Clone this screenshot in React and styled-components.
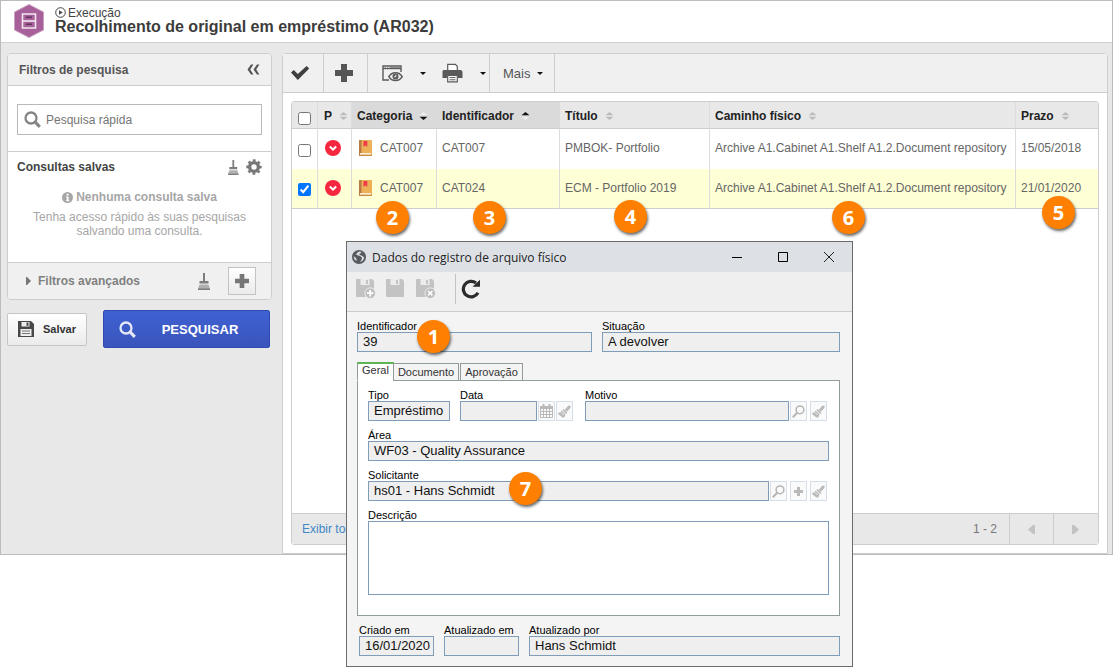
import { useState } from 'react';
import styled, { createGlobalStyle, css } from 'styled-components';

const GlobalStyle = createGlobalStyle`
	* {
		box-sizing: border-box;
	}
	body {
		margin: 0;
		background: #fff;
		font-family: "Liberation Sans", Arial, sans-serif;
		font-size: 12px;
		color: #555;
	}
	button, input, textarea {
		font-family: inherit;
		font-size: inherit;
		color: inherit;
	}
	button {
		padding: 0;
		cursor: pointer;
	}
	svg {
		display: block;
		flex: none;
	}
`;

/* ---------- icons ---------- */

const ArchiveLogo = () => (
	<svg width="32" height="34" viewBox="0 0 32 34">
		<path d="M16 .5 30.5 8v18L16 33.5 1.5 26V8z" fill="#a8609a" stroke="#c9a0c1" />
		<path d="M9.5 10h13v14h-13z" fill="#a8609a" stroke="#f3e8f1" strokeWidth="1.6" />
		<path d="M9.5 17h13" stroke="#f3e8f1" strokeWidth="1.6" />
		<path d="M13 13.2h6M13 20.2h6" stroke="#5f3558" strokeWidth="1.4" />
	</svg>
);

const PlayIcon = () => (
	<svg width="11" height="11" viewBox="0 0 11 11">
		<circle cx="5.5" cy="5.5" r="4.8" fill="none" stroke="#444" />
		<path d="M4 3.2 7.8 5.5 4 7.8z" fill="#444" />
	</svg>
);

const CollapseIcon = () => (
	<svg width="13" height="11" viewBox="0 0 13 11" fill="#555">
		<path d="M4 .5h2.4L3.2 5.5l3.2 5H4L.5 5.5z" />
		<path d="M10 .5h2.4L9.2 5.5l3.2 5H10L6.5 5.5z" />
	</svg>
);

const SearchIcon = ({ color = '#858585', width = 2.3 }) => (
	<svg width="17" height="17" viewBox="0 0 17 17" fill="none" stroke={color}>
		<circle cx="7" cy="7" r="5.5" strokeWidth={width} />
		<path d="m11.2 11.2 4.6 4.6" strokeWidth={width + 0.8} />
	</svg>
);

const BroomIcon = ({ size = 17 }) => (
	<svg width={(size * 12) / 17} height={size} viewBox="0 0 12 17" fill="#7d7d7d">
		<path d="M5 0h2v8H5z" />
		<path d="M1.5 8h9v2.5h-9z" />
		<path d="M1.5 11.5h9l1.5 4.5H0z" fill="#b0b0b0" />
		<path d="M0 15.5h12V17H0z" />
	</svg>
);

const GearIcon = () => (
	<svg width="16" height="16" viewBox="0 0 16 16">
		<circle cx="8" cy="8" r="4.4" fill="none" stroke="#777" strokeWidth="3.4" />
		<circle
			cx="8"
			cy="8"
			r="6.6"
			fill="none"
			stroke="#777"
			strokeWidth="2.2"
			strokeDasharray="2.8 2.384"
			strokeDashoffset="1.4"
		/>
	</svg>
);

const InfoIcon = () => (
	<svg width="11" height="11" viewBox="0 0 11 11">
		<circle cx="5.5" cy="5.5" r="5.5" fill="#a6a6a6" />
		<path d="M4.6 1.8h2v1.7h-2zM4 4.5h2.6v3.8h.8v1H4v-1h.7V5.5H4z" fill="#fff" />
	</svg>
);

const PlusIcon = ({ size = 14, color = '#777' }) => (
	<svg width={size} height={size} viewBox="0 0 18 18" fill={color}>
		<path d="M6 0h6v6h6v6h-6v6H6v-6H0V6h6z" />
	</svg>
);

const FloppyIcon = () => (
	<svg width="16" height="16" viewBox="0 0 16 16">
		<path d="M0 0h13l3 3v13H0z" fill="#484848" />
		<path d="M3.5 1h8v4.5h-8z" fill="#eee" />
		<path d="M8.5 1.5h2v3.3h-2z" fill="#484848" />
		<path d="M2.5 8h11v7h-11z" fill="#eee" />
		<path d="M4 10h8M4 12.5h8" stroke="#777" />
	</svg>
);

const CheckIcon = () => (
	<svg width="20" height="16" viewBox="0 0 20 16">
		<path d="M1 7.6 3.8 5l4 4L16.600 1l2.600 2.600L7.800 15z" fill="#3f3f3f" />
	</svg>
);

const WindowEyeIcon = () => (
	<svg width="21" height="18" viewBox="0 0 21 18">
		<path d="M7 16H1V2h18v6" fill="none" stroke="#5a5a5a" strokeWidth="1.4" />
		<path d="M1 4.6h18" stroke="#5a5a5a" strokeWidth="1.2" />
		<path d="M2.500 3.300h1.200M5 3.300h1.200M7.500 3.300h11" stroke="#777" />
		<path d="M6.800 12.600c3-5.200 10.400-5.200 13.400 0-3 5.200-10.400 5.200-13.400 0z" fill="#f0f0f0" stroke="#5a5a5a" strokeWidth="1.5" />
		<circle cx="13.500" cy="12.400" r="3" fill="#5a5a5a" />
		<path d="M13.800 10.800v2h-1.600" fill="none" stroke="#f0f0f0" />
	</svg>
);

const PrinterIcon = () => (
	<svg width="21" height="20" viewBox="0 0 21 20">
		<path d="M5.7 8V1.3h7.6l2 2V8" fill="#fff" stroke="#5a5a5a" strokeWidth="1.2" />
		<path d="M1.5 7h17.5l1.5 1.500V15H16v-2.500H5V15H.5V8z" fill="#5a5a5a" />
		<path d="M5.7 12.5h9.6v6.3H5.7z" fill="#fff" stroke="#5a5a5a" strokeWidth="1.2" />
		<path d="M7.5 14.6h6M7.5 16.8h6" stroke="#5a5a5a" />
	</svg>
);

const Caret = () => (
	<svg width="6" height="3" viewBox="0 0 6 3">
		<path d="M0 0h6L3 3z" fill="#111" />
	</svg>
);

const SortIcon = ({ up = '#bbb', down = '#bbb' }) => (
	<svg width="9" height="8" viewBox="0 0 9 8">
		<path d="M4.5 0 8.5 3.2h-8z" fill={up} />
		<path d="M4.5 8 .5 4.8h8z" fill={down} />
	</svg>
);

const PriorityIcon = () => (
	<svg width="16" height="16" viewBox="0 0 16 16">
		<circle cx="8" cy="8" r="8" fill="#f5283f" />
		<path d="m4.8 6.6 3.2 3 3.2-3" fill="none" stroke="#fff" strokeWidth="2" />
	</svg>
);

const BookIcon = () => (
	<svg width="13" height="16" viewBox="0 0 13 16">
		<path d="M1 0h11a1 1 0 0 1 1 1v15H1a1 1 0 0 1-1-1V1a1 1 0 0 1 1-1z" fill="#ecb057" />
		<path d="M0 1a1 1 0 0 1 1-1h1.500v13H0z" fill="#b87a45" />
		<path d="M1 13h11v1.800H1z" fill="#f8ecd8" />
		<path d="M0 13h1v3a1 1 0 0 1-1-1z" fill="#b87a45" />
		<path d="M1 14.800h12V16H1z" fill="#c98b3e" />
		<path d="M4.500 1h3.800v6L6.400 5.200 4.500 7z" fill="#f0384a" />
	</svg>
);

const PageArrow = ({ next }) => (
	<svg width="7" height="9" viewBox="0 0 7 9">
		<path d={next ? 'M0 0h2l5 4.5L2 9H0z' : 'M7 0H5L0 4.5 5 9h2z'} fill="#c2c2c2" />
	</svg>
);

const ExpandArrow = () => (
	<svg width="5" height="8" viewBox="0 0 5 8">
		<path d="M0 0h1l4 4-4 4H0z" fill="#777" />
	</svg>
);

const GlobeIcon = () => (
	<svg width="14" height="14" viewBox="0 0 14 14">
		<circle cx="7" cy="7" r="7" fill="#555a60" />
		<path
			d="M8 1.200 5.500 2.500 4 4.500l1.500.8L8 6l2 1.500L9.500 10 7.500 12.200 11 10.500l1.200-3L10.500 6 8 5 7 4l2.500-1.300z"
			fill="#dde1e6"
		/>
		<path d="M1.500 6 4 8l1 3-2.500-1.500z" fill="#dde1e6" />
	</svg>
);

const SaveIcon = ({ extra }) => (
	<svg width="21" height="21" viewBox="0 0 21 21">
		<path d="M1 2a1 1 0 0 1 1-1h15l2 2v15a1 1 0 0 1-1 1H2a1 1 0 0 1-1-1z" fill="#c3c3c3" />
		<path d="M5.5 1h9v6h-9z" fill="#ececec" />
		<path d="M11 2h2v4h-2z" fill="#c3c3c3" />
		{extra && <circle cx="15.200" cy="15.200" r="5.300" fill="#bdbdbd" stroke="#efefef" strokeWidth="1" />}
		{extra === 'plus' && <path d="M15.200 12v6.400M12 15.200h6.400" stroke="#fff" strokeWidth="1.800" />}
		{extra === 'cross' && <path d="m13 13 4.400 4.400M17.400 13 13 17.400" stroke="#fff" strokeWidth="1.600" />}
	</svg>
);

const RefreshIcon = () => (
	<svg width="20" height="20" viewBox="0 0 20 20">
		<path d="M17 13.800A7.800 7.800 0 1 1 15 4" fill="none" stroke="#2b2b2b" strokeWidth="3.200" />
		<path d="M19 .8v7h-7.500z" fill="#2b2b2b" />
	</svg>
);

const CalendarIcon = () => (
	<svg width="13" height="14" viewBox="0 0 13 14">
		<path d="M.5 2.5h12v11H.5z" fill="#fafafa" stroke="#b9b9b9" />
		<path d="M0 2h13v3H0z" fill="#b9b9b9" />
		<path d="M3.5 0v3M9.5 0v3" stroke="#b9b9b9" strokeWidth="2" />
		<path d="M3.5 5v8M6.5 5v8M9.5 5v8M1 7.5h11M1 10.5h11" stroke="#b9b9b9" />
	</svg>
);

const LensIcon = () => (
	<svg width="13" height="13" viewBox="0 0 13 13" fill="none" stroke="#b5b5b5">
		<circle cx="8" cy="4.8" r="3.9" strokeWidth="1.5" />
		<path d="M5.2 7.800.8 12.2" strokeWidth="2" />
	</svg>
);

const BrushIcon = () => (
	<svg width="13" height="13" viewBox="0 0 13 13" fill="#b9b9b9">
		<path d="M10.200.8 12.600.6l-.2 2.400-3.600 3.800-2-2z" />
		<path d="m5.500 4 3.800 3.800-1.200 1.200-3.800-3.800z" />
		<path d="m3.400 5.600 4 4-.8 2.400-1.800.8L0 9l.6-1.600 1.600.4z" />
		<path d="m3 7.500 2.500 2.500" stroke="#fafafa" strokeWidth=".8" />
	</svg>
);

const MinimizeIcon = () => (
	<svg width="12" height="12" viewBox="0 0 12 12">
		<path d="M1 6.5h10" stroke="#000" />
	</svg>
);

const MaximizeIcon = () => (
	<svg width="12" height="12" viewBox="0 0 12 12">
		<path d="M1.5 1.5h9v9h-9z" fill="none" stroke="#000" />
	</svg>
);

const CloseIcon = () => (
	<svg width="12" height="12" viewBox="0 0 12 12">
		<path d="m1 1 10 10M11 1 1 11" stroke="#222" />
	</svg>
);

/* ---------- page ---------- */

const Page = styled.div`
	position: relative;
	min-height: 669px;
`;

const AppFrame = styled.div`
	border: 1px solid #bcbcbc;
	background: #e8e8e8;
`;

const Header = styled.header`
	display: flex;
	align-items: center;
	gap: 10px;
	height: 42px;
	padding: 0 12px 2px;
	background: #fff;
	border-bottom: 1px solid #d0d0d0;
`;

const Breadcrumb = styled.div`
	display: flex;
	align-items: center;
	gap: 2px;
	line-height: 12px;
	color: #444;
`;

const Title = styled.h1`
	margin: 0;
	font-size: 16px;
	line-height: 16px;
	color: #3c3c3c;
`;

const Content = styled.div`
	display: flex;
	align-items: stretch;
	gap: 10px;
	padding: 10px 4px 0 6px;
`;

const Sidebar = styled.aside`
	flex: none;
	width: 265px;
`;

const Panel = styled.div`
	border: 1px solid #cdcdcd;
	border-radius: 4px;
	overflow: hidden;
	background: #fff;
`;

const PanelHeader = styled.div`
	display: flex;
	align-items: center;
	justify-content: space-between;
	height: 32px;
	padding: 0 11px;
	background: #f0f0f0;
	border-bottom: 1px solid #cdcdcd;
`;

const Heading = styled.h2`
	margin: 0;
	font-size: 12px;
	line-height: 14px;
	color: ${({ $color }) => $color || '#555'};
`;

const IconButton = styled.button`
	display: flex;
	align-items: center;
	justify-content: center;
	border: 0;
	background: none;
`;

const SearchArea = styled.div`
	padding: 18px 9px 16px;
	border-bottom: 1px solid #cdcdcd;
`;

const SearchBox = styled.label`
	display: flex;
	align-items: center;
	gap: 5px;
	height: 31px;
	padding: 0 6px;
	border: 1px solid #b9b9b9;
	background: #fff;
	& input {
		flex: 1;
		min-width: 0;
		padding: 0;
		border: 0;
		outline: none;
	}
	& input::placeholder {
		color: #757575;
		opacity: 1;
	}
`;

const SavedQueries = styled.div`
	height: 111px;
	padding: 7px 9px 0;
	border-bottom: 1px solid #cdcdcd;
`;

const Row = styled.div`
	display: flex;
	align-items: center;
	gap: ${({ $gap }) => $gap || 0}px;
`;

const Spread = styled(Row)`
	justify-content: space-between;
`;

const EmptyMessage = styled.div`
	padding-top: 15px;
	text-align: center;
	line-height: 14px;
	color: #a6a6a6;
	& p {
		margin: 6px 12px 0;
	}
`;

const EmptyTitle = styled(Row)`
	justify-content: center;
	font-weight: bold;
`;

const Advanced = styled.div`
	display: flex;
	align-items: center;
	height: 36px;
	padding: 0 15px 0 18px;
	background: #f0f0f0;
`;

const AdvancedToggle = styled(IconButton)`
	gap: 7px;
	margin-right: auto;
	font-weight: bold;
	color: #808080;
`;

const SquareButton = styled(IconButton)`
	width: 28px;
	height: 28px;
	margin-left: 18px;
	border: 1px solid #c3c3c3;
	background: linear-gradient(#fff, #ebebeb);
`;

const Actions = styled.div`
	display: flex;
	align-items: center;
	gap: 16px;
	padding: 10px 2px 0 0;
`;

const SaveButton = styled(IconButton)`
	gap: 9px;
	width: 80px;
	height: 33px;
	border: 1px solid #c6c6c6;
	border-radius: 2px;
	background: linear-gradient(#fff, #ebebeb);
	font-size: 11px;
	font-weight: bold;
	color: #333;
`;

const SearchButton = styled(IconButton)`
	flex: 1;
	justify-content: flex-start;
	height: 38px;
	padding-left: 15px;
	border: 1px solid #2f4ab0;
	border-radius: 2px;
	background: linear-gradient(#3f61d3, #3a55bb);
	font-size: 13px;
	font-weight: bold;
	color: #fff;
	& span {
		flex: 1;
		padding-right: 5px;
	}
`;

const Main = styled.main`
	flex: 1;
	min-width: 0;
	display: flex;
	flex-direction: column;
	border: 1px solid #cdcdcd;
	border-radius: 4px 4px 0 0;
	background: #fff;
`;

const Toolbar = styled.div`
	display: flex;
	height: 39px;
	background: #f0f0f0;
	border-bottom: 1px solid #cdcdcd;
	font-size: 13px;
`;

const ToolGroup = styled.div`
	display: flex;
	align-items: center;
	padding-left: ${({ $indent }) => $indent}px;
	width: ${({ $width }) => $width}px;
	border-right: 1px solid #cdcdcd;
`;

const DropButton = styled(IconButton)`
	gap: ${({ $gap }) => $gap}px;
	height: 38px;
`;

const Grid = styled.div`
	display: flex;
	flex-direction: column;
	margin: 8px;
	border: 1px solid #cdcdcd;
	border-radius: 3px;
`;

const GridBody = styled.div`
	min-height: 411px;
`;

const Table = styled.table`
	width: 100%;
	table-layout: fixed;
	border-collapse: separate;
	border-spacing: 0;
`;

const cell = css`
	text-align: left;
	white-space: nowrap;
	border-right: 1px solid #dcdcdc;
	&:last-child {
		border-right: 0;
	}
`;

const Th = styled.th`
	${cell}
	height: 27px;
	padding: 2px 0 0 ${({ $indent }) => $indent || 5}px;
	border-bottom: 1px solid #cdcdcd;
	background: ${({ $sorted }) => ($sorted ? '#dadada' : '#e8e8e8')};
	color: #222;
	${({ $sorted }) => $sorted && 'border-right-color: #dadada;'}
`;

const Td = styled.td`
	${cell}
	position: relative;
	height: 40px;
	padding: 0 0 2px ${({ $indent }) => $indent || 5}px;
	color: #666;
	background: ${({ $selected }) => ($selected ? '#ffffd5' : '#fff')};
	${({ $selected }) => $selected && 'border-bottom: 1px solid #cdcdcd;'}
`;

const Check = styled.input`
	display: block;
	width: 13px;
	height: 13px;
	margin: 4px 0 0 1px;
`;

const Footer = styled.div`
	display: flex;
	align-items: center;
	height: 31px;
	padding: 0 1px 0 10px;
	border-top: 1px solid #cdcdcd;
	background: #e8e8e8;
	& a {
		color: #3f87c7;
		text-decoration: none;
	}
`;

const Count = styled.span`
	margin-left: auto;
	padding-right: 12px;
	color: #777;
`;

const PagerButton = styled(IconButton)`
	width: 44px;
	height: 30px;
	border-left: 1px solid #cdcdcd;
`;

const Badge = styled.span`
	position: absolute;
	z-index: 2;
	left: ${({ $x }) => $x}px;
	top: ${({ $y }) => $y}px;
	display: flex;
	align-items: center;
	justify-content: center;
	width: 33px;
	height: 33px;
	border-radius: 50%;
	background: #ff8000;
	box-shadow: 1px 2px 3px rgba(0, 0, 0, 0.6);
	font-family: "Noto Sans", "Open Sans", sans-serif;
	font-size: 20px;
	line-height: 20px;
	font-weight: bold;
	color: #fff;
`;

/* ---------- record window ---------- */

const Window = styled.section`
	position: absolute;
	z-index: 3;
	left: 346px;
	top: 241px;
	width: 507px;
	border: 1px solid #6b6b6b;
	background: #f4f4f4;
	color: #000;
`;

const TitleBar = styled.div`
	display: flex;
	align-items: center;
	gap: 6px;
	height: 30px;
	padding-left: 5px;
	background: #dde1e6;
	font-family: "Open Sans", "Noto Sans", sans-serif;
	font-size: 12px;
	color: #222;
`;

const WindowTitle = styled.span`
	flex: 1;
`;

const WindowButton = styled(IconButton)`
	width: 46px;
	height: 30px;
`;

const WindowTools = styled.div`
	display: flex;
	align-items: center;
	gap: 9px;
	height: 40px;
	padding: 0 8px 6px;
	background: #efefef;
	border-bottom: 1px solid #cbcbcb;
`;

const Divider = styled.span`
	width: 1px;
	height: 30px;
	margin-left: 10px;
	margin-right: -4px;
	background: #c3c3c3;
`;

const Form = styled.form`
	padding: 8px 12px 10px 10px;
`;

const FieldRow = styled.div`
	display: flex;
	gap: 10px;
`;

const FieldBox = styled.div`
	position: relative;
	flex: ${({ $width }) => ($width ? `0 0 ${$width}px` : '1')};
	min-width: 0;
	& label {
		display: block;
		font-size: 11px;
		line-height: 12px;
		white-space: nowrap;
	}
`;

const Controls = styled.div`
	display: flex;
	gap: 1px;
`;

const Buttons = styled.div`
	display: flex;
	gap: ${({ $gap }) => $gap || 3}px;
	padding-right: 2px;
`;

const TextInput = styled.input`
	flex: 1;
	min-width: 0;
	height: 20px;
	padding: 0 0 2px 5px;
	border: 1px solid #7f9db9;
	border-radius: 0;
	outline: none;
	background: #efefef;
	font-size: 13px;
	color: #111;
`;

const TextArea = styled.textarea`
	display: block;
	width: 100%;
	height: 74px;
	border: 1px solid #7f9db9;
	outline: none;
	resize: none;
`;

const FieldButton = styled(IconButton)`
	width: 17px;
	height: 20px;
	border: 1px solid #d6dfe9;
	background: #fafafa;
`;

const Tabs = styled.div`
	display: flex;
	align-items: flex-end;
	height: 19px;
	margin: 10px 0 -1px;
`;

const Tab = styled.button`
	position: relative;
	height: 18px;
	margin-right: 1px;
	padding: 0 4px;
	border: 1px solid #919b9c;
	background: #f4f4f4;
	font-size: 11px;
	line-height: 15px;
	color: #333;
	${({ $active }) =>
		$active &&
		css`
			height: 19px;
			margin-right: -1px;
			padding-bottom: 4px;
			border-top: 2px solid #5ab552;
			border-bottom-color: #fff;
			background: #fff;
			line-height: 12px;
		`}
`;

const TabPanel = styled.div`
	display: flex;
	flex-direction: column;
	gap: 8px;
	margin-bottom: 8px;
	padding: 8px 10px 20px;
	border: 1px solid #919b9c;
	background: #fff;
`;

const Meta = styled(FieldRow)`
	padding-left: 2px;
`;

const Field = ({ id, label, value = '', width, buttons, gap, children }) => (
	<FieldBox $width={width}>
		<label htmlFor={id}>{label}</label>
		<Controls>
			<TextInput id={id} defaultValue={value} readOnly />
			{buttons && <Buttons $gap={gap}>{buttons}</Buttons>}
		</Controls>
		{children}
	</FieldBox>
);

const LensButton = () => (
	<FieldButton type="button" aria-label="Pesquisar">
		<LensIcon />
	</FieldButton>
);

const ClearButton = () => (
	<FieldButton type="button" aria-label="Limpar">
		<BrushIcon />
	</FieldButton>
);

const RecordWindow = () => (
	<Window>
		<TitleBar>
			<GlobeIcon />
			<WindowTitle>Dados do registro de arquivo físico</WindowTitle>
			<Row>
				<WindowButton aria-label="Minimizar">
					<MinimizeIcon />
				</WindowButton>
				<WindowButton aria-label="Maximizar">
					<MaximizeIcon />
				</WindowButton>
				<WindowButton aria-label="Fechar">
					<CloseIcon />
				</WindowButton>
			</Row>
		</TitleBar>
		<WindowTools>
			<IconButton aria-label="Salvar e novo">
				<SaveIcon extra="plus" />
			</IconButton>
			<IconButton aria-label="Salvar registro">
				<SaveIcon />
			</IconButton>
			<IconButton aria-label="Salvar e sair">
				<SaveIcon extra="cross" />
			</IconButton>
			<Divider />
			<IconButton aria-label="Atualizar">
				<RefreshIcon />
			</IconButton>
		</WindowTools>
		<Form>
			<FieldRow>
				<Field id="identificador" label="Identificador" value="39" width={235}>
					<Badge $x={60} $y={0}>1</Badge>
				</Field>
				<Field id="situacao" label="Situação" value="A devolver" />
			</FieldRow>
			<Tabs>
				<Tab type="button" $active>Geral</Tab>
				<Tab type="button">Documento</Tab>
				<Tab type="button">Aprovação</Tab>
			</Tabs>
			<TabPanel>
				<FieldRow>
					<Field id="tipo" label="Tipo" value="Empréstimo" width={82} />
					<Field
						id="data"
						label="Data"
						width={115}
						gap={1}
						buttons={
							<>
								<FieldButton type="button" aria-label="Calendário">
									<CalendarIcon />
								</FieldButton>
								<ClearButton />
							</>
						}
					/>
					<Field
						id="motivo"
						label="Motivo"
						buttons={
							<>
								<LensButton />
								<ClearButton />
							</>
						}
					/>
				</FieldRow>
				<Field id="area" label="Área" value="WF03 - Quality Assurance" />
				<Field
					id="solicitante"
					label="Solicitante"
					value="hs01 - Hans Schmidt"
					buttons={
						<>
							<LensButton />
							<FieldButton type="button" aria-label="Adicionar">
								<PlusIcon size={9} color="#b9b9b9" />
							</FieldButton>
							<ClearButton />
						</>
					}
				>
					<Badge $x={141} $y={3}>7</Badge>
				</Field>
				<FieldBox>
					<label htmlFor="descricao">Descrição</label>
					<TextArea id="descricao" />
				</FieldBox>
			</TabPanel>
			<Meta>
				<Field id="criado" label="Criado em" value="16/01/2020" width={75} />
				<Field id="atualizado" label="Atualizado em" width={75} />
				<Field id="autor" label="Atualizado por" value="Hans Schmidt" />
			</Meta>
		</Form>
	</Window>
);

const documents = [
	{
		id: 'CAT007',
		category: 'CAT007',
		title: 'PMBOK- Portfolio',
		path: 'Archive A1.Cabinet A1.Shelf A1.2.Document repository',
		due: '15/05/2018',
	},
	{
		id: 'CAT024',
		category: 'CAT007',
		title: 'ECM - Portfolio 2019',
		path: 'Archive A1.Cabinet A1.Shelf A1.2.Document repository',
		due: '21/01/2020',
	},
];

const App = () => {
	const [selected, setSelected] = useState(['CAT024']);

	const toggle = (id) =>
		setSelected(selected.includes(id) ? selected.filter((item) => item !== id) : [...selected, id]);

	return (
		<Page>
			<GlobalStyle />
			<AppFrame>
				<Header>
					<ArchiveLogo />
					<div>
						<Breadcrumb>
							<PlayIcon />
							Execução
						</Breadcrumb>
						<Title>Recolhimento de original em empréstimo (AR032)</Title>
					</div>
				</Header>
				<Content>
					<Sidebar>
						<Panel>
							<PanelHeader>
								<Heading>Filtros de pesquisa</Heading>
								<IconButton aria-label="Recolher">
									<CollapseIcon />
								</IconButton>
							</PanelHeader>
							<SearchArea>
								<SearchBox>
									<SearchIcon />
									<input type="text" placeholder="Pesquisa rápida" aria-label="Pesquisa rápida" />
								</SearchBox>
							</SearchArea>
							<SavedQueries>
								<Spread>
									<Heading $color="#444">Consultas salvas</Heading>
									<Row $gap={7}>
										<IconButton aria-label="Limpar consultas">
											<BroomIcon size={15} />
										</IconButton>
										<IconButton aria-label="Configurar">
											<GearIcon />
										</IconButton>
									</Row>
								</Spread>
								<EmptyMessage>
									<EmptyTitle $gap={3}>
										<InfoIcon />
										Nenhuma consulta salva
									</EmptyTitle>
									<p>Tenha acesso rápido às suas pesquisas salvando uma consulta.</p>
								</EmptyMessage>
							</SavedQueries>
							<Advanced>
								<AdvancedToggle>
									<ExpandArrow />
									Filtros avançados
								</AdvancedToggle>
								<IconButton aria-label="Limpar filtros">
									<BroomIcon />
								</IconButton>
								<SquareButton aria-label="Adicionar filtro">
									<PlusIcon />
								</SquareButton>
							</Advanced>
						</Panel>
						<Actions>
							<SaveButton>
								<FloppyIcon />
								Salvar
							</SaveButton>
							<SearchButton>
								<SearchIcon color="#e4e8f6" />
								<span>PESQUISAR</span>
							</SearchButton>
						</Actions>
					</Sidebar>
					<Main>
						<Toolbar>
							<ToolGroup $width={41} $indent={7}>
								<IconButton aria-label="Confirmar">
									<CheckIcon />
								</IconButton>
							</ToolGroup>
							<ToolGroup $width={44} $indent={11}>
								<IconButton aria-label="Adicionar">
									<PlusIcon size={18} color="#555" />
								</IconButton>
							</ToolGroup>
							<ToolGroup $width={122} $indent={14}>
								<Row $gap={16}>
									<DropButton $gap={17} aria-label="Visualizar">
										<WindowEyeIcon />
										<Caret />
									</DropButton>
									<DropButton $gap={17} aria-label="Imprimir">
										<PrinterIcon />
										<Caret />
									</DropButton>
								</Row>
							</ToolGroup>
							<ToolGroup $width={65} $indent={13}>
								<DropButton $gap={7}>
									Mais
									<Caret />
								</DropButton>
							</ToolGroup>
						</Toolbar>
						<Grid>
							<GridBody>
								<Table>
									<colgroup>
										<col width="26" />
										<col width="34" />
										<col width="85" />
										<col width="123" />
										<col width="150" />
										<col />
										<col width="82" />
									</colgroup>
									<thead>
										<tr>
											<Th>
												<Check type="checkbox" aria-label="Selecionar todos" />
											</Th>
											<Th $indent={6}>
												<Row $gap={7}>P <SortIcon /></Row>
											</Th>
											<Th $sorted>
												<Row $gap={7}>Categoria <SortIcon up="#eee" down="#111" /></Row>
											</Th>
											<Th $sorted>
												<Row $gap={7}>Identificador <SortIcon up="#111" down="#eee" /></Row>
											</Th>
											<Th>
												<Row $gap={7}>Título <SortIcon /></Row>
											</Th>
											<Th>
												<Row $gap={7}>Caminho físico <SortIcon /></Row>
											</Th>
											<Th>
												<Row $gap={7}>Prazo <SortIcon /></Row>
											</Th>
										</tr>
									</thead>
									<tbody>
										{documents.map(({ id, category, title, path, due }, index) => {
											const isSelected = selected.includes(id);
											const marked = index === 1;
											return (
												<tr key={id}>
													<Td $selected={isSelected}>
														<Check
															type="checkbox"
															aria-label={`Selecionar ${id}`}
															checked={isSelected}
															onChange={() => toggle(id)}
														/>
													</Td>
													<Td $selected={isSelected} $indent={7}>
														<PriorityIcon />
													</Td>
													<Td $selected={isSelected} $indent={7}>
														<Row $gap={8}>
															<BookIcon />
															{category}
														</Row>
														{marked && <Badge $x={24} $y={32}>2</Badge>}
													</Td>
													<Td $selected={isSelected}>
														{id}
														{marked && <Badge $x={36} $y={32}>3</Badge>}
													</Td>
													<Td $selected={isSelected}>
														{title}
														{marked && <Badge $x={54} $y={31}>4</Badge>}
													</Td>
													<Td $selected={isSelected}>
														{path}
														{marked && <Badge $x={122} $y={32}>6</Badge>}
													</Td>
													<Td $selected={isSelected}>
														{due}
														{marked && <Badge $x={26} $y={27}>5</Badge>}
													</Td>
												</tr>
											);
										})}
									</tbody>
								</Table>
							</GridBody>
							<Footer>
								<a href="#todos">Exibir todos</a>
								<Count>1 - 2</Count>
								<PagerButton aria-label="Página anterior">
									<PageArrow />
								</PagerButton>
								<PagerButton aria-label="Próxima página">
									<PageArrow next />
								</PagerButton>
							</Footer>
						</Grid>
					</Main>
				</Content>
			</AppFrame>
			<RecordWindow />
		</Page>
	);
};

export default App;
